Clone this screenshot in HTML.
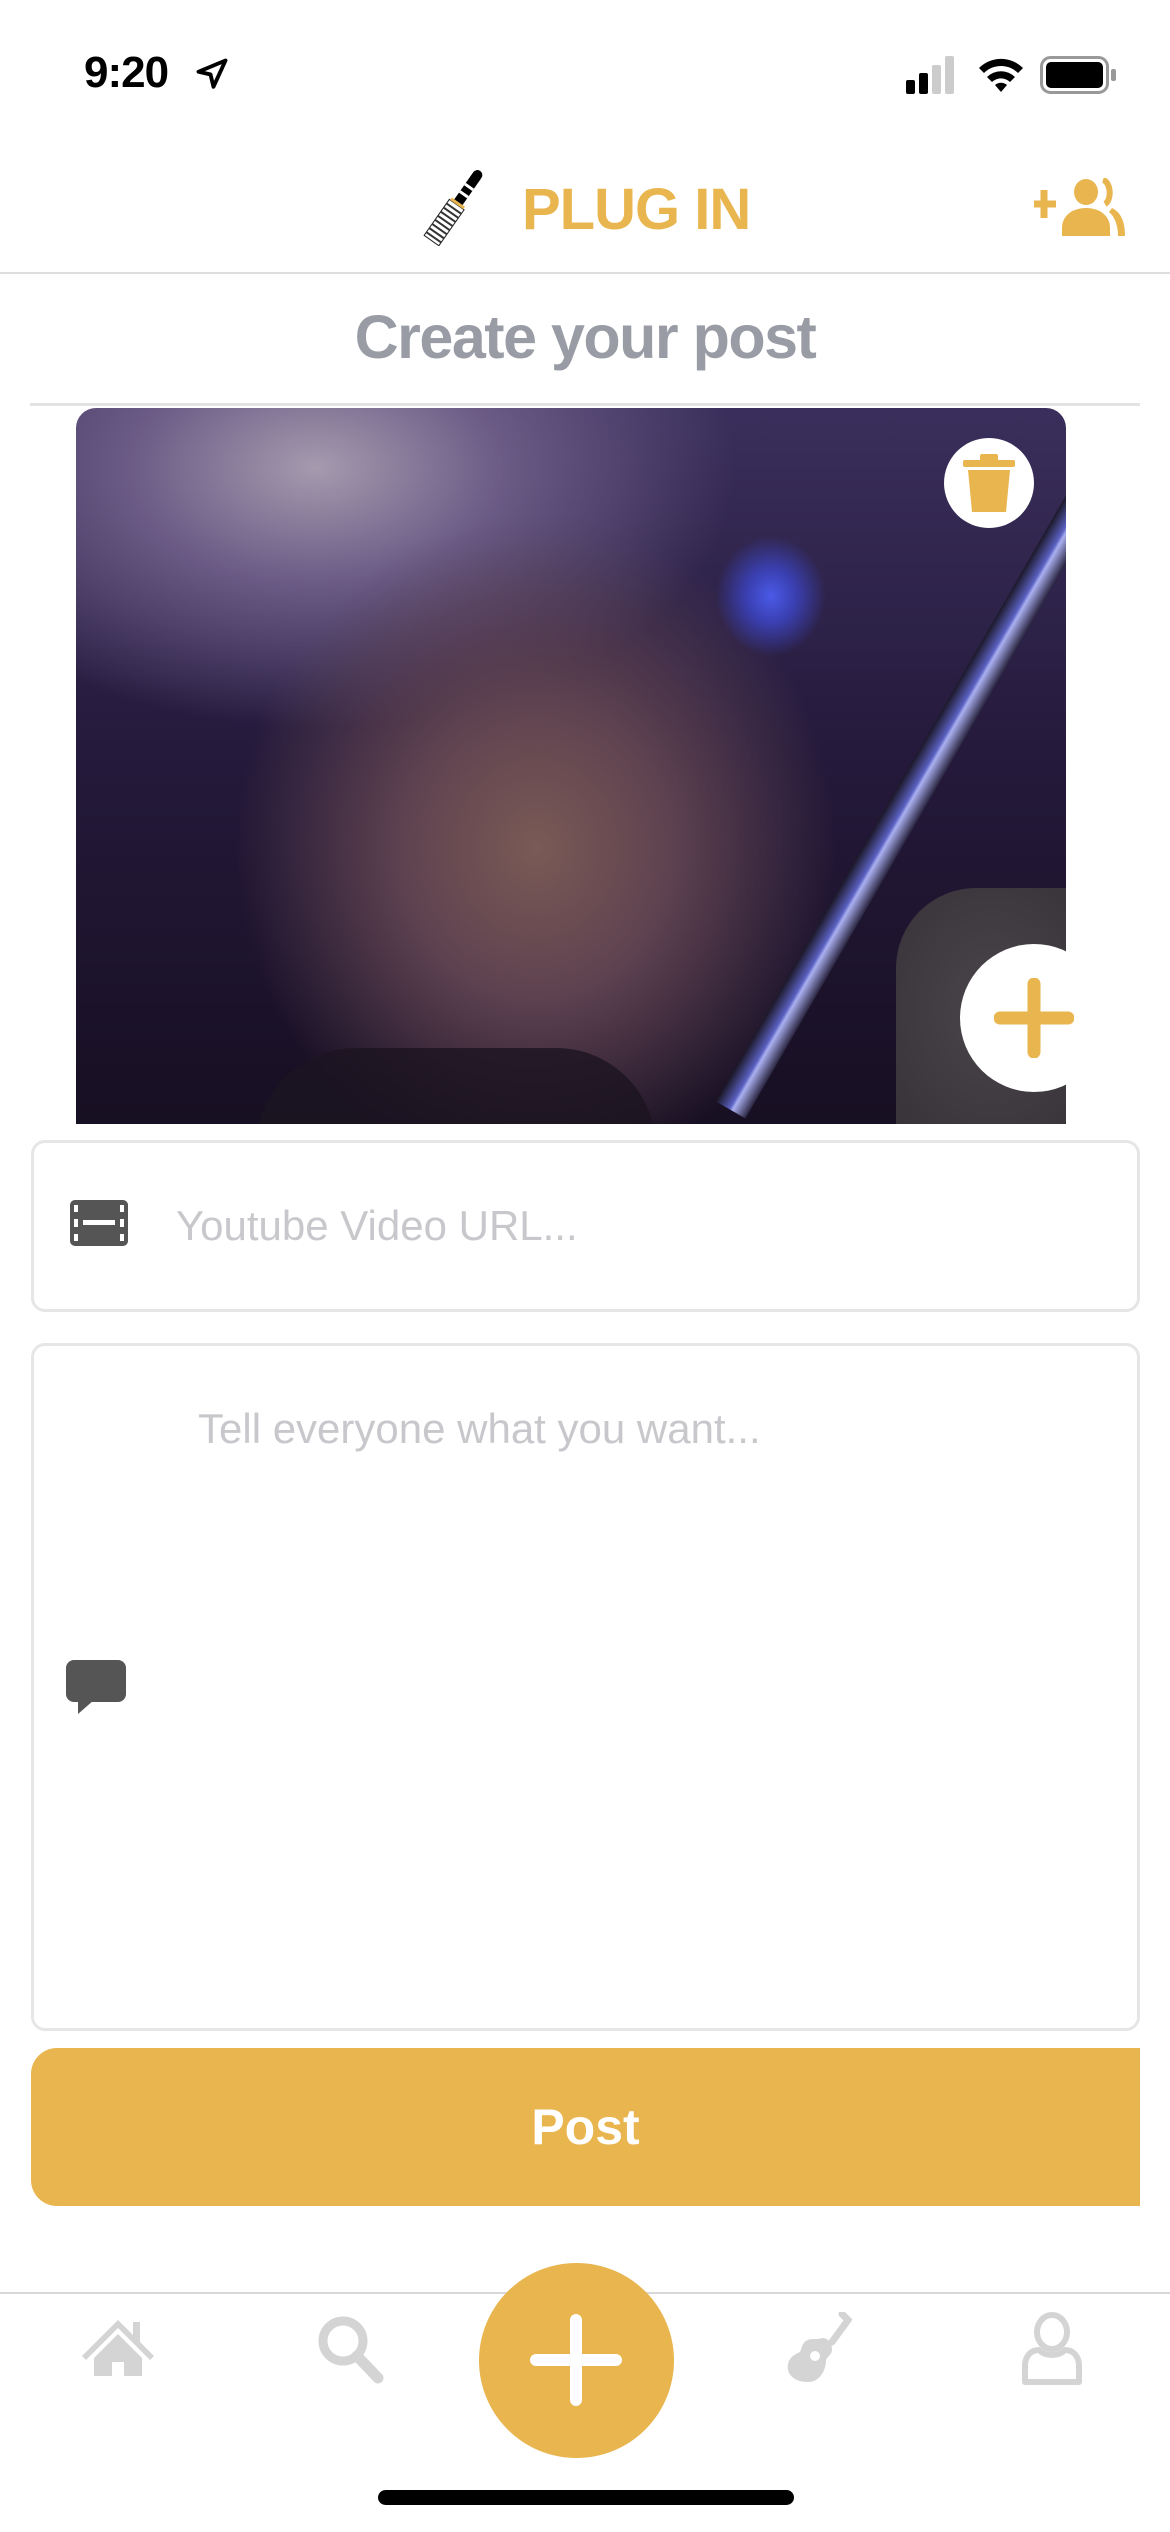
<!DOCTYPE html>
<html><head><meta charset="utf-8"><style>
*{margin:0;padding:0;box-sizing:border-box}
body{width:1170px;height:2532px;background:#fff;position:relative;overflow:hidden;font-family:"Liberation Sans",sans-serif}
.abs{position:absolute}
</style></head><body>
<!-- status bar -->
<div class="abs" style="left:84px;top:48px;font-size:44px;font-weight:bold;color:#000;letter-spacing:-1px">9:20</div>
<svg class="abs" style="left:194px;top:56px" width="36" height="36" viewBox="0 0 24 24"><path d="M21 3 3 10.5l8 1.8 2 8.2z" fill="none" stroke="#000" stroke-width="2.6" stroke-linejoin="round"/></svg>
<svg class="abs" style="left:906px;top:54px" width="54" height="40"><rect x="0" y="26" width="9" height="14" rx="2" fill="#000"/><rect x="13" y="19" width="9" height="21" rx="2" fill="#000"/><rect x="26" y="11" width="9" height="29" rx="2" fill="#ccc"/><rect x="39" y="2" width="9" height="38" rx="2" fill="#ccc"/></svg>
<svg class="abs" style="left:977px;top:54px" width="48" height="40" viewBox="0 0 48 40"><path d="M24 38 30 31a9 9 0 0 0-12 0z" fill="#000"/><path d="M10 23a20 20 0 0 1 28 0l-5 5a13 13 0 0 0-18 0z" fill="#000"/><path d="M2 14a31 31 0 0 1 44 0l-5 5a24 24 0 0 0-34 0z" fill="#000"/></svg>
<svg class="abs" style="left:1040px;top:56px" width="78" height="38"><rect x="1.5" y="1.5" width="66" height="35" rx="9" fill="none" stroke="#999" stroke-width="3"/><rect x="6" y="6" width="57" height="26" rx="5" fill="#000"/><rect x="71" y="13" width="5" height="12" rx="2" fill="#999"/></svg>

<!-- header -->
<svg class="abs" style="left:414px;top:168px" width="82" height="78" viewBox="0 0 82 78">
<g transform="rotate(-55 41 39)">
<rect x="0" y="30" width="44" height="18" fill="#fff" stroke="#222" stroke-width="1"/>
<g stroke="#333" stroke-width="2"><line x1="4" y1="30" x2="4" y2="48"/><line x1="9" y1="30" x2="9" y2="48"/><line x1="14" y1="30" x2="14" y2="48"/><line x1="19" y1="30" x2="19" y2="48"/><line x1="24" y1="30" x2="24" y2="48"/><line x1="29" y1="30" x2="29" y2="48"/><line x1="34" y1="30" x2="34" y2="48"/><line x1="39" y1="30" x2="39" y2="48"/></g>
<rect x="44" y="31" width="3" height="16" fill="#e9b54e"/>
<rect x="47" y="34" width="32" height="10" fill="#000"/>
<rect x="55" y="34" width="3" height="10" fill="#fff"/><rect x="64" y="34" width="3" height="10" fill="#fff"/>
<circle cx="80" cy="39" r="5" fill="#000"/>
</g></svg>
<div class="abs" style="left:522px;top:176px;font-size:58px;font-weight:bold;color:#e9b54e;letter-spacing:-1px">PLUG IN</div>
<svg class="abs" style="left:1034px;top:178px" width="92" height="58" viewBox="0 0 92 58">
<path d="M10 12v28M0 26h22" stroke="#e9b54e" stroke-width="7"/>
<ellipse cx="52" cy="14" rx="12" ry="13" fill="#e9b54e"/>
<path d="M28 58v-8c0-12 10-20 24-20s24 8 24 20v8z" fill="#e9b54e"/>
<path d="M69 2c8 2 9 20 2 24" stroke="#e9b54e" stroke-width="6" fill="none"/>
<path d="M78 30c8 4 13 12 13 28h-7c0-12-4-20-9-24z" fill="#e9b54e"/>
</svg>
<div class="abs" style="left:0;top:272px;width:1170px;height:2px;background:#ddd"></div>
<div class="abs" style="left:0;top:302px;width:1170px;text-align:center;font-size:61px;font-weight:bold;color:#9a9ca5;letter-spacing:-1.5px">Create your post</div>
<div class="abs" style="left:30px;top:403px;width:1110px;height:3px;background:#e3e3e3"></div>

<!-- image -->
<div class="abs" style="left:76px;top:408px;width:990px;height:716px;border-radius:20px 20px 0 0;overflow:hidden;background:
radial-gradient(ellipse 55px 60px at 695px 188px,#4a5ae8 0%,#3a3fb0 45%,rgba(40,30,90,0) 100%),
radial-gradient(ellipse 300px 330px at 460px 440px,#7a5a55 0%,#5e4250 45%,rgba(40,25,50,0) 100%),
radial-gradient(ellipse 420px 260px at 240px 60px,#a59aae 0%,#6a5a85 45%,rgba(40,30,70,0) 100%),
linear-gradient(180deg,#3a2f5c 0%,#24193a 50%,#170f22 100%)">
<div class="abs" style="left:820px;top:480px;width:240px;height:300px;background:radial-gradient(ellipse at 40% 40%,#4a454a,#2e2a30);border-radius:80px 0 0 0"></div>
<div class="abs" style="left:180px;top:640px;width:400px;height:120px;background:#1b1420;border-radius:100px 100px 0 0;opacity:.8"></div>
<div class="abs" style="left:1000px;top:70px;width:34px;height:720px;background:linear-gradient(90deg,#1c1828,#5a60c0 45%,#aab0f0 55%,#2a2540);transform:rotate(30deg);transform-origin:top left"></div>
</div>
<div class="abs" style="left:944px;top:438px;width:90px;height:90px;border-radius:50%;background:#fff"></div>
<svg class="abs" style="left:963px;top:454px" width="52" height="60" viewBox="0 0 52 60"><rect x="0" y="6" width="52" height="7" rx="2" fill="#e9b54e"/><rect x="17" y="0" width="18" height="8" rx="2" fill="#e9b54e"/><path d="M5 16h42l-4 42H9z" fill="#e9b54e"/></svg>
<div class="abs" style="left:960px;top:944px;width:148px;height:148px;border-radius:50%;background:#fff"></div>
<svg class="abs" style="left:994px;top:978px" width="80" height="80"><path d="M40 6v68M6 40h68" stroke="#e9b54e" stroke-width="13" stroke-linecap="round"/></svg>

<!-- youtube input -->
<div class="abs" style="left:31px;top:1140px;width:1109px;height:172px;border:3px solid #e6e6e6;border-radius:14px"></div>
<svg class="abs" style="left:70px;top:1200px" width="58" height="46" viewBox="0 0 58 46"><rect width="58" height="46" rx="5" fill="#555"/><g fill="#fff"><rect x="4" y="5" width="4" height="7"/><rect x="4" y="19" width="4" height="8"/><rect x="4" y="34" width="4" height="7"/><rect x="50" y="5" width="4" height="7"/><rect x="50" y="19" width="4" height="8"/><rect x="50" y="34" width="4" height="7"/><rect x="13" y="20" width="32" height="5"/></g></svg>
<div class="abs" style="left:176px;top:1202px;font-size:42px;color:#c8c8cc">Youtube Video URL...</div>

<!-- textarea -->
<div class="abs" style="left:31px;top:1343px;width:1109px;height:688px;border:3px solid #e6e6e6;border-radius:14px"></div>
<div class="abs" style="left:198px;top:1405px;font-size:42px;color:#c8c8cc">Tell everyone what you want...</div>
<svg class="abs" style="left:66px;top:1660px" width="60" height="54" viewBox="0 0 60 54"><rect width="60" height="42" rx="8" fill="#555"/><path d="M12 38v16l16-14z" fill="#555"/></svg>

<!-- post -->
<div class="abs" style="left:31px;top:2048px;width:1109px;height:158px;background:#e9b54e;border-radius:26px 0 0 26px;color:#fff;font-size:50px;font-weight:bold;text-align:center;line-height:158px">Post</div>

<!-- tab bar -->
<div class="abs" style="left:0;top:2292px;width:1170px;height:2px;background:#d8d8d8"></div>
<svg class="abs" style="left:80px;top:2316px" width="76" height="60" viewBox="0 0 76 60"><path d="M38 4 2 40l4 4 32-32 32 32 4-4-14-14V6h-7v13z" fill="#d4d4d4"/><path d="M14 42 38 18l24 24v18H44V46h-12v14H14z" fill="#d4d4d4"/></svg>
<svg class="abs" style="left:316px;top:2314px" width="70" height="70" viewBox="0 0 70 70"><circle cx="27" cy="27" r="20" fill="none" stroke="#d4d4d4" stroke-width="9"/><path d="M41 42 62 64" stroke="#d4d4d4" stroke-width="11" stroke-linecap="round"/></svg>
<div class="abs" style="left:479px;top:2263px;width:195px;height:195px;border-radius:50%;background:#e9b54e"></div>
<svg class="abs" style="left:526px;top:2310px" width="100" height="100"><path d="M50 10v80M10 50h80" stroke="#fff" stroke-width="12" stroke-linecap="round"/></svg>
<svg class="abs" style="left:782px;top:2312px" width="70" height="72" viewBox="0 0 70 72"><path d="M60 2 66 8 50 30" stroke="#d4d4d4" stroke-width="7" fill="none" stroke-linecap="round"/><path d="M40 26c6 0 10 4 10 12 0 4-4 6-6 10 0 10-6 22-18 22C12 70 4 62 6 52c2-8 8-10 12-12 2-4 2-10 8-12 4-2 8 0 14-2z" fill="#d4d4d4"/><circle cx="33" cy="44" r="5" fill="#fff"/></svg>
<svg class="abs" style="left:1020px;top:2312px" width="64" height="74" viewBox="0 0 64 74"><ellipse cx="32" cy="20" rx="15" ry="17" fill="none" stroke="#d4d4d4" stroke-width="6"/><path d="M5 70V54c0-10 6-16 14-16 4 4 9 5 13 5s9-1 13-5c8 0 14 6 14 16v16z" fill="none" stroke="#d4d4d4" stroke-width="6" stroke-linejoin="round"/></svg>
<div class="abs" style="left:378px;top:2490px;width:416px;height:15px;border-radius:8px;background:#000"></div>
</body></html>
